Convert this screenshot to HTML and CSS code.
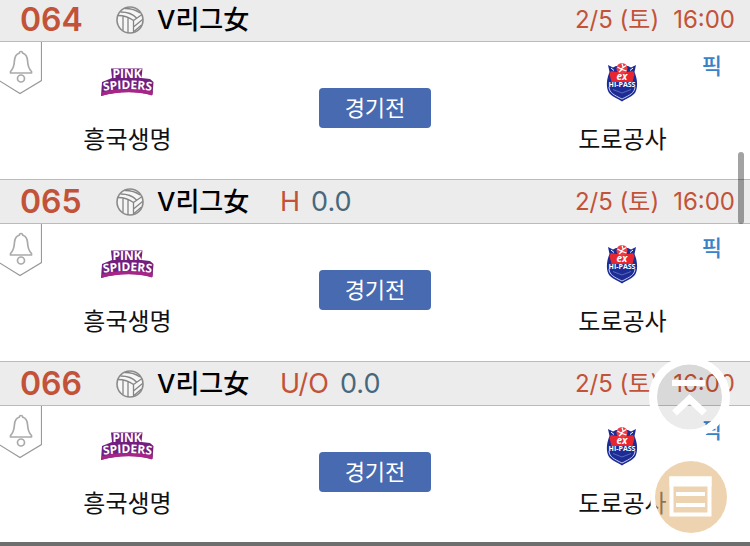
FILE: index.html
```html
<!DOCTYPE html>
<html lang="ko">
<head>
<meta charset="utf-8">
<meta name="viewport" content="width=device-width, initial-scale=1">
<title>V리그女</title>
<link rel="stylesheet" href="styles.css">
</head>
<body>
<svg class="defs" aria-hidden="true">
  <symbol id="ball" viewBox="0 0 28 28">
    <circle cx="14" cy="14" r="13" fill="#f6f6f6" stroke="#8b8b8b" stroke-width="1.6"/>
    <g fill="none" stroke="#858585" stroke-width="1.300" stroke-linejoin="round">
      <path d="M2 9.500C7 9.500 12 10.500 17.500 14.500L26 8.500M17.500 14.500V26.500M7 10.500V24.500M12 12V27M4.500 6C11 6 16 7 20.500 12M9 2.500C15 2.500 20 4 24 7M17.500 21L26.500 13.500M18 25.500L25.500 19"/>
    </g>
  </symbol>
  <symbol id="bell" viewBox="0 0 42 53">
    <path d="M-1 -1H41.500V38.500L20 51.500L-1 38.500" fill="#fff" stroke="#999" stroke-width="1.200"/>
    <path d="M21 9.500C19.800 9.500 19.300 10.200 19.300 11.200C15.500 12.200 14.600 15.500 14.400 19C14.200 24 13.500 26.500 10.500 29.500V31H31.500V29.500C28.500 26.500 27.800 24 27.600 19C27.400 15.500 26.500 12.200 22.700 11.200C22.700 10.200 22.200 9.500 21 9.500Z" fill="none" stroke="#aaa" stroke-width="1.700" stroke-linejoin="round"/>
    <circle cx="21" cy="36.500" r="3.500" fill="none" stroke="#aaa" stroke-width="1.700"/>
  </symbol>
  <symbol id="spiders" viewBox="0 0 54 40">
    <path d="M11 6.500H42.500L41.500 16L50 17L53.500 20L52.500 33C36 28.500 18 29 1 34L2 20L12 16Z" fill="#712080"/>
    <path d="M1 34L2.500 30C19 26 36 26 53 29L52 33.500C36 29 18 29.500 1 34Z" fill="#a62586"/>
  </symbol>
  <symbol id="hipass" viewBox="0 0 32 40">
    <path d="M2 3L7 5.500L10 4H22L25 5.500L30 3L28.500 10C31.500 17 32 25 29.500 30C26.500 35 21 36 16 39.500C11 36 5.500 35 2.500 30C0 25 .5 17 3.500 10Z" fill="#1c2c94"/>
    <path d="M3 25C3.500 31 8 33 16 37C24 33 28.500 31 29 25" fill="none" stroke="#c3cbee" stroke-width="1"/>
    <path d="M5 6L8 8.500M27 6L24 8.500" stroke="#fff" stroke-width="1"/>
    <path d="M5 9L11 10H21L27 9L28.500 12L26.500 20H5.500L3.500 12Z" fill="#e8262f"/>
    <circle cx="16" cy="6.500" r="5.500" fill="#ef3b42"/>
    <path d="M11.500 5L15 7L20 3.500M13 10L16 7.500L20.500 9M16 1.500L17 5" fill="none" stroke="#fff" stroke-width="1.200"/>
    <path d="M7 27.500L16 31L25 27.500" fill="none" stroke="#5869bd" stroke-width="1"/>
  </symbol>
  <path id="arc" d="M2 29Q27 25 53 29"/>
</svg>

<main class="matches">
  <article class="match">
    <header class="match-head">
      <span class="number">064</span>
      <svg class="ball" aria-hidden="true"><use href="#ball"/></svg>
      <h2 class="league">V리그女</h2>
      <span class="date">2/5 (토)</span>
      <time class="time">16:00</time>
    </header>
    <div class="match-body">
      <button class="alarm" type="button" aria-label="알림"><svg><use href="#bell"/></svg></button>
      <div class="team">
        <svg class="spiders logo" viewBox="0 0 54 40"><use href="#spiders"/><text class="pink" x="27" y="16">PINK</text><text class="arched"><textPath href="#arc" startOffset="50%">SPIDERS</textPath></text></svg>
        <span>흥국생명</span>
      </div>
      <button class="status" type="button">경기전</button>
      <div class="team">
        <svg class="hipass logo" viewBox="0 0 32 40"><use href="#hipass"/><text class="ex" x="16" y="18">ex</text><text class="pass" x="16" y="25">HI-PASS</text></svg>
        <span>도로공사</span>
      </div>
      <a class="pick" href="#">픽</a>
    </div>
  </article>

  <article class="match">
    <header class="match-head">
      <span class="number">065</span>
      <svg class="ball" aria-hidden="true"><use href="#ball"/></svg>
      <h2 class="league">V리그女</h2>
      <span class="bet">H</span><span class="line">0.0</span>
      <span class="date">2/5 (토)</span>
      <time class="time">16:00</time>
    </header>
    <div class="match-body">
      <button class="alarm" type="button" aria-label="알림"><svg><use href="#bell"/></svg></button>
      <div class="team">
        <svg class="spiders logo" viewBox="0 0 54 40"><use href="#spiders"/><text class="pink" x="27" y="16">PINK</text><text class="arched"><textPath href="#arc" startOffset="50%">SPIDERS</textPath></text></svg>
        <span>흥국생명</span>
      </div>
      <button class="status" type="button">경기전</button>
      <div class="team">
        <svg class="hipass logo" viewBox="0 0 32 40"><use href="#hipass"/><text class="ex" x="16" y="18">ex</text><text class="pass" x="16" y="25">HI-PASS</text></svg>
        <span>도로공사</span>
      </div>
      <a class="pick" href="#">픽</a>
    </div>
  </article>

  <article class="match">
    <header class="match-head">
      <span class="number">066</span>
      <svg class="ball" aria-hidden="true"><use href="#ball"/></svg>
      <h2 class="league">V리그女</h2>
      <span class="bet">U/O</span><span class="line">0.0</span>
      <span class="date">2/5 (토)</span>
      <time class="time">16:00</time>
    </header>
    <div class="match-body">
      <button class="alarm" type="button" aria-label="알림"><svg><use href="#bell"/></svg></button>
      <div class="team">
        <svg class="spiders logo" viewBox="0 0 54 40"><use href="#spiders"/><text class="pink" x="27" y="16">PINK</text><text class="arched"><textPath href="#arc" startOffset="50%">SPIDERS</textPath></text></svg>
        <span>흥국생명</span>
      </div>
      <button class="status" type="button">경기전</button>
      <div class="team">
        <svg class="hipass logo" viewBox="0 0 32 40"><use href="#hipass"/><text class="ex" x="16" y="18">ex</text><text class="pass" x="16" y="25">HI-PASS</text></svg>
        <span>도로공사</span>
      </div>
      <a class="pick" href="#">픽</a>
    </div>
  </article>
</main>

<div class="bottom-edge"></div>
<div class="scroll-thumb"></div>

<button class="float to-top" type="button" aria-label="맨 위로">
  <svg viewBox="0 0 82 82">
    <circle cx="41.500" cy="41" r="33" fill="#000" fill-opacity=".08"/>
    <circle cx="41.500" cy="41" r="36.500" fill="none" stroke="#fff" stroke-width="8"/>
    <path d="M24 27H57" stroke="#fff" stroke-width="6"/>
    <path d="M26.500 57L41.500 43L56.500 57" fill="none" stroke="#fff" stroke-width="7"/>
  </svg>
</button>
<button class="float slip" type="button" aria-label="목록">
  <svg viewBox="-5 -5 82 82">
    <circle cx="36" cy="36" r="38.500" fill="none" stroke="#fff" stroke-width="5"/>
    <circle cx="36" cy="36" r="36" fill="#e3b67b" fill-opacity=".6"/>
    <path d="M16.500 17.500H54.500V53.500H16.500ZM21 33H50M21 44H50" fill="none" stroke="#fff" stroke-width="4"/>
    <path d="M14.500 20.500H56.500" stroke="#fff" stroke-width="10"/>
  </svg>
</button>
</body>
</html>
```

FILE: styles.css
```css
* {
  box-sizing: border-box;
}

body {
  margin: 0;
  background: #fff;
  color: #111;
  font-family: Inter, "Noto Sans CJK KR", sans-serif;
  overflow: hidden;
}

button {
  margin: 0;
  padding: 0;
  border: 0;
  background: none;
  font: inherit;
  cursor: pointer;
}

svg {
  display: block;
}

.defs {
  position: absolute;
  width: 0;
  height: 0;
}

/* the list is scrolled slightly past its first edge */
.matches {
  margin-top: -3px;
}

.match-head {
  display: flex;
  align-items: center;
  height: 45px;
  padding: 0 15px 0 20px;
  border-top: 1px solid #bbb;
  border-bottom: 1px solid #bbb;
  background: #ececec;
  color: #c25238;
  line-height: 43px;
  white-space: nowrap;
}

.number {
  width: 96px;
  font-size: 32px;
  font-weight: 600;
}

.ball {
  width: 28px;
  height: 28px;
}

.league {
  width: 136px;
  margin: 0;
  padding-left: 13px;
  color: #000;
  font-size: 26px;
  font-weight: 500;
}

.bet,
.line {
  font-size: 27px;
}

.line {
  margin-left: 11px;
  color: #47687c;
}

.date,
.time {
  font-size: 24px;
}

.date {
  margin-left: auto;
}

.time {
  margin-left: 14px;
}

.match-body {
  position: relative;
  display: grid;
  grid-template-columns: 34% 32% 34%;
  justify-items: center;
  align-items: start;
  padding: 20px 0 21px;
}

.team {
  display: flex;
  flex-direction: column;
  align-items: center;
  gap: 20px;
  font-size: 24px;
  line-height: 36px;
}

.logo {
  height: 40px;
  fill: #fff;
  font-family: "Open Sans", sans-serif;
  font-weight: 700;
  line-height: 1;
  text-anchor: middle;
}

.spiders {
  width: 54px;
}

.hipass {
  width: 32px;
}

.pink {
  font-size: 12px;
}

.arched {
  font-size: 12px;
}

.ex {
  font-size: 10px;
  font-style: italic;
}

.pass {
  font-size: 7px;
}

.status {
  width: 112px;
  height: 40px;
  margin-top: 26px;
  border-radius: 4px;
  background: #476ab0;
  color: #fff;
  font-size: 22px;
  line-height: 40px;
}

.alarm {
  position: absolute;
  top: 0;
  left: 0;
}

.alarm svg {
  width: 42px;
  height: 53px;
}

.pick {
  position: absolute;
  top: 8px;
  right: 28px;
  color: #3a82c8;
  font-size: 22px;
  font-weight: 500;
  line-height: 32px;
  text-decoration: none;
}

.bottom-edge {
  position: fixed;
  right: 0;
  bottom: 0;
  left: 0;
  height: 4px;
  background: #6e6e6e;
}

.scroll-thumb {
  position: fixed;
  top: 152px;
  right: 6px;
  width: 6px;
  height: 72px;
  border-radius: 3px;
  background: rgba(0, 0, 0, 0.36);
}

.float {
  position: fixed;
  width: 82px;
  height: 82px;
}

.to-top {
  right: 20px;
  bottom: 108px;
}

.slip {
  right: 18px;
  bottom: 8px;
}
```
